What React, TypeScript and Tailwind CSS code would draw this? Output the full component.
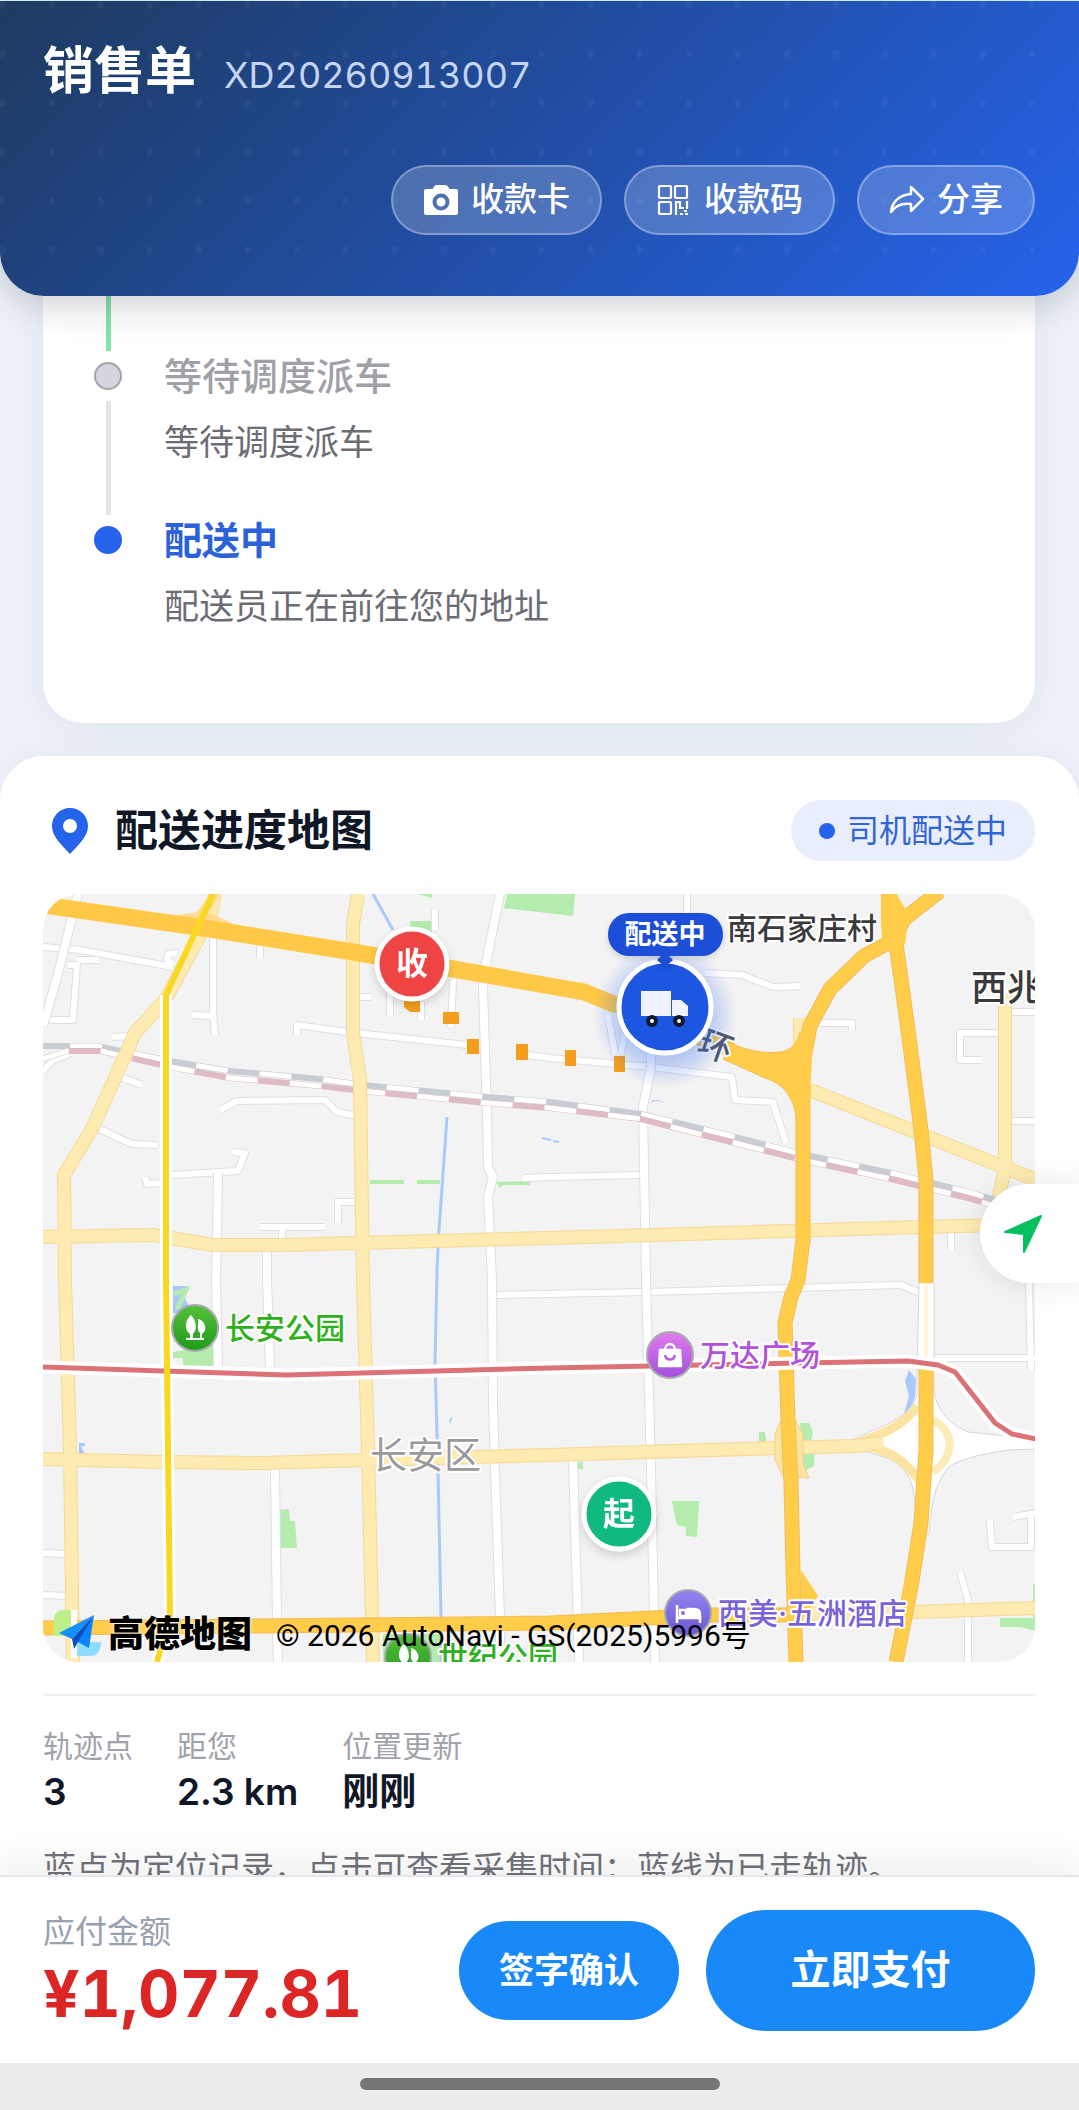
import type { ReactNode } from "react";

interface Step {
  title: string;
  desc: string;
  state: "waiting" | "active";
}

interface Poi {
  name: string;
  x: number;
  y: number;
  textClass: string;
  icon: "park" | "mall" | "hotel";
}

const steps: Step[] = [
  { title: "等待调度派车", desc: "等待调度派车", state: "waiting" },
  { title: "配送中", desc: "配送员正在前往您的地址", state: "active" },
];

const stats = [
  { label: "轨迹点", value: "3" },
  { label: "距您", value: "2.3 km" },
  { label: "位置更新", value: "刚刚" },
];

const pois: Poi[] = [
  { name: "长安公园", x: 152, y: 434, textClass: "fill-[#2db01c]", icon: "park" },
  { name: "万达广场", x: 627, y: 461, textClass: "fill-[#b052dc]", icon: "mall" },
  { name: "西美·五洲酒店", x: 645, y: 719, textClass: "fill-[#7a62d8]", icon: "hotel" },
  { name: "世纪公园", x: 365, y: 763, textClass: "fill-[#2db01c]", icon: "park" },
];

const poiFill = { park: "url(#poi-park)", mall: "url(#poi-mall)", hotel: "url(#poi-hotel)" };

// Side streets
const minorRoads = [
  "M170 44V119L172 141M149 121L170 122",
  "M217 51V64",
  "M254 141V131L304 138L424 151",
  "M177 216L194 207L282 206L294 218L313 222",
  "M52 233L89 250L114 251",
  "M102 283L104 290L119 289M129 281L195 277L202 259L190 258",
  "M217 333H282M239 333V344",
  "M315 308H295V329",
  "M0 53L37 56L130 73M130 70L124 66L125 60L134 59",
  "M25 71H34L30 126H7M34 66H56",
  "M69 143L87 142M77 183L99 191",
  "M0 177L10 166L28 159",
  "M392 16V36M410 86L408 133M347 90V122M378 108V126M315 103H328",
  "M644 0V20",
  "M662 79L699 81L730 93L757 92",
  "M774 129H809V136",
  "M485 161L507 164L608 173L689 183L692 206L730 208L743 249",
  "M565 120L572 160M583 130L578 160",
  "M480 284L507 283L598 281",
  "M957 139H917V166H939",
  "M966 118H993M966 227H993",
  "M454 401L603 398L858 391L881 401",
  "M892 464H993M986 389L988 476",
  "M947 626L949 653H988V620M970 623L993 619",
  "M917 678L925 706V768",
  "M0 659L25 660M0 701L26 702",
  "M908 339V356",
];

const streets = [
  "M35 0L30 19L15 80L0 132",
  "M457 0L443 69L440 93L444 219L445 273L450 283L445 303L449 386L450 509L452 576L457 723V768",
  "M608 150V173L600 213L603 386L608 576L612 768",
  "M175 279L174 344L173 386L175 473",
  "M224 354V386L227 473M232 576L234 729L235 768",
  "M530 566L536 768",
];

const avenues = [
  "M172 0L167 23L122 106L92 139L50 233L21 281L22 386L27 556L30 768",
  "M315 0L310 30L310 139L317 186L320 386L325 556L330 768",
  "M0 343L110 341L170 351H240L507 344L878 333L993 330",
  "M0 565L120 568L220 569L320 566L507 561L733 554L811 552L840 549",
  "M767 196L875 239L993 286",
  "M962 100V273L956 303",
  "M742 720L871 718L993 714",
  "M757 124V150",
];

const highways = [
  "M0 11L154 33L310 58L410 75L507 92L541 98L573 111L640 138L689 156",
  "M851 46L821 62L787 95L767 132L760 169V346L755 386L748 403L742 429L745 526L748 589L750 676L753 768",
  "M846 -5L853 49L865 136L878 236L883 286V389",
  "M883 472V556L878 629L868 693L853 768",
  "M897 -3L861 25L851 46",
  "M0 734L507 729L669 721H748",
];

const railTop = "M0 152L54 152L127 167L187 177L277 185L320 191L444 203L507 208L598 220L676 239L763 261L848 279L925 298L993 318";
const railBottom = "M0 165L24 157H58L127 173L187 184L277 192L320 197L444 209L507 214L598 225L676 245L763 267L848 285L925 304L993 324";
const redLine = "M0 473L120 477L244 481L507 474L865 467L895 471L912 478L952 529L969 540L993 545";

function CameraIcon() {
  return (
    <svg viewBox="0 0 36 32" className="w-9 h-8" aria-hidden="true">
      <path
        fill="white"
        fillRule="evenodd"
        d="M11.500 2Q12.500 1 14 1H22Q23.500 1 24.500 2L26.500 5H33Q35 5 35 7V29Q35 31 33 31H3Q1 31 1 29V7Q1 5 3 5H9.500ZM18 9.500A8.500 8.500 0 1 0 18 26.500A8.500 8.500 0 1 0 18 9.500Z"
      />
      <circle cx="18" cy="18" r="4.500" fill="white" />
    </svg>
  );
}

function QrIcon() {
  return (
    <svg viewBox="0 0 36 32" className="w-9 h-8" fill="none" stroke="white" strokeWidth="2.200" aria-hidden="true">
      <rect x="3" y="2" width="12" height="12" rx="1" />
      <rect x="19" y="2" width="12" height="12" rx="1" />
      <rect x="3" y="18" width="12" height="12" rx="1" />
      <path d="M20 31V18H24V24H28M31 17V25" />
      <path d="M24 30H27M29 30H32M28 27H31" />
    </svg>
  );
}

function ShareIcon() {
  return (
    <svg viewBox="0 0 36 32" className="w-9 h-8" fill="none" stroke="white" strokeWidth="2.500" strokeLinejoin="round" aria-hidden="true">
      <path d="M22 3L34 15L22 27V20C13 19 6 22 2 28C3 18 10 11 22 10Z" />
    </svg>
  );
}

function HeaderButton({ icon, label }: { icon: ReactNode; label: string }) {
  return (
    <button
      type="button"
      className="flex items-center gap-3 h-[70px] px-[30px] rounded-full border-2 border-white/30 bg-white/20 text-[33px] font-medium text-white"
    >
      {icon}
      {label}
    </button>
  );
}

function PoiGlyph({ icon }: { icon: Poi["icon"] }) {
  if (icon === "park") {
    return (
      <g fill="white">
        <path d="M-4 -13C1 -8 3 1 -2 6V10H5V5C1 1 4 -4 3 -9C9 -8 14 1 7 6V10H9V12H-9V10H-5V6C-12 1 -9 -9 -4 -13Z" />
      </g>
    );
  }
  if (icon === "mall") {
    return (
      <g fill="none" stroke="white" strokeWidth="2.500">
        <path d="M-10 -5H10L11 11H-11Z" fill="white" strokeLinejoin="round" />
        <path d="M-5 -5C-5 -13 5 -13 5 -5" />
        <path d="M-5 0C-4 6 4 6 5 0" stroke="#b55fe0" />
      </g>
    );
  }
  return (
    <g fill="none" stroke="white" strokeWidth="2.500">
      <path d="M-11 -8V10M12 10V3" />
      <path d="M-11 5H12V1Q12 -4 6 -4H0V4" fill="white" />
      <path d="M-8 -3H-2V3H-8Z" />
    </g>
  );
}

function RoadLayer({ paths, casing, fill, width }: { paths: string[]; casing: string; fill: string; width: number }) {
  const d = paths.join("");
  return (
    <g fill="none" strokeLinejoin="round">
      <path d={d} stroke={casing} strokeWidth={width + 2} />
      <path d={d} stroke={fill} strokeWidth={width} />
    </g>
  );
}

function DeliveryMap() {
  return (
    <svg
      viewBox="0 0 992 768"
      preserveAspectRatio="xMidYMid slice"
      className="block w-full h-[768px]"
      role="img"
      aria-label="配送进度地图"
    >
      <defs>
        <linearGradient id="poi-park" x1="0" y1="0" x2="0" y2="1">
          <stop offset="0" stopColor="#55c13c" />
          <stop offset="1" stopColor="#1f9a1a" />
        </linearGradient>
        <linearGradient id="poi-mall" x1="0" y1="0" x2="0" y2="1">
          <stop offset="0" stopColor="#e07cec" />
          <stop offset="1" stopColor="#a24fdc" />
        </linearGradient>
        <linearGradient id="poi-hotel" x1="0" y1="0" x2="0" y2="1">
          <stop offset="0" stopColor="#8f86f2" />
          <stop offset="1" stopColor="#6a56cf" />
        </linearGradient>
        <radialGradient id="truck-glow">
          <stop offset="0.600" stopColor="#2563eb" stopOpacity="0.300" />
          <stop offset="1" stopColor="#2563eb" stopOpacity="0" />
        </radialGradient>
      </defs>

      <rect width="993" height="768" fill="#f3f3f3" />

      {/* Parks and water */}
      <g fill="#b4ecae">
        <path d="M464 0H532L530 22L461 14ZM375 0H389V4ZM367 27H389V40H367Z" />
        <path d="M327 286H361V290H327ZM374 286H397V290H374ZM454 288L487 287V291H460L456 294Z" />
        <path d="M130 458L172 450V472H140V464H130Z" />
        <path d="M237 616L246 615L247 627H252L254 654H236Z" />
        <path d="M629 607H656L654 643L643 642V633L634 631Z" />
        <path d="M757 529H766L770 538L767 552H772L771 572L760 578ZM716 538H722L724 552H716ZM534 568H540V575H534Z" />
        <path d="M957 724H993V737L978 733H957ZM990 690H993V724H990ZM340 740H400V768H340Z" />
      </g>
      <g fill="#a9c8fb">
        <path d="M130 392H145L141 402L147 415L130 420Z" />
        <path d="M866 476L873 485L872 503L865 521L861 520L866 502L862 487Z" />
        <path d="M610 206L625 209L614 206L608 209ZM36 549L42 549V552L38 553L42 560H36ZM410 522L407 530L406 526Z" />
      </g>
      <path d="M131 400L143 396L134 415" fill="none" stroke="#b4ecae" strokeWidth="5" />
      <g fill="none" stroke="#aac9fb" strokeWidth="3">
        <path d="M330 0L350 36M396 336L394 376L392 469L395 576L398 723V768" />
        <path d="M404 223L396 336" strokeWidth="3" />
        <path d="M499 244L508 246M510 247L516 248" strokeWidth="2" />
      </g>

      <RoadLayer paths={minorRoads} casing="#dfdfe3" fill="#ffffff" width={6} />
      <RoadLayer paths={streets} casing="#dfdfe3" fill="#ffffff" width={8} />

      {/* Railway */}
      <g fill="none">
        <path d={railTop} stroke="#c8ccd3" strokeWidth="6" />
        <path d={railTop} stroke="white" strokeWidth="5" strokeDasharray="32 32" strokeDashoffset="-27" />
        <path d={railBottom} stroke="#dfbbc3" strokeWidth="6" />
        <path d={railBottom} stroke="white" strokeWidth="5" strokeDasharray="32 32" strokeDashoffset="5" />
      </g>

      {/* Interchange ramps on the east ring */}
      <path
        d="M874 480V500C870 520 850 528 820 541L800 551L832 560C860 568 870 580 872 610L876 640H886C888 610 892 590 905 574C915 565 940 560 965 556L993 555V543L965 542L925 538C905 530 893 515 891 495V389H876Z"
        fill="white"
        stroke="#d6d6dd"
        strokeWidth="1"
      />
      <path d="M874 512C862 530 845 538 815 549C845 556 862 566 876 586" fill="none" stroke="#fbe3a0" strokeWidth="9" />
      <path d="M890 526C912 538 912 562 890 578" fill="none" stroke="#fdebb8" strokeWidth="8" />
      <path d="M883 389V472" stroke="#fff3c9" strokeWidth="3" />

      <RoadLayer paths={avenues} casing="#f6d894" fill="#feebb1" width={12} />
      <path d="M737 528L752 526L760 540V570L766 584L740 582L732 566V540Z" fill="#fde4a0" stroke="#f4cf83" strokeWidth="1" />
      <path d="M128 22L154 18L167 0L178 0L166 18L190 30L154 40Z" fill="#fbdc92" />
      <RoadLayer paths={highways} casing="#f3bb55" fill="#ffcd4a" width={13} />
      <path d="M0 11L154 33L310 58L410 75L507 92L541 98L573 111" fill="none" stroke="#ffc847" strokeWidth="17" />
      {/* Slip roads */}
      <path
        d="M684 147C700 156 720 160 738 158C748 156 754 150 757 138L770 140L766 230H754C752 205 742 190 722 184L680 165Z"
        fill="#ffcd4a"
      />
      <path d="M684 147C700 156 720 160 738 158C748 156 754 150 757 138M754 230C752 205 742 190 722 184L680 165" fill="none" stroke="#f3bb55" strokeWidth="1" />
      <path d="M758 676L775 702L758 728Z" fill="#ffcd4a" />
      <path d="M838 0H853L866 20L862 50L840 58L838 30Z" fill="#ffcd4a" />

      {/* Metro lines */}
      <g fill="none" strokeLinejoin="round">
        <path d="M123 101V386L127 723L114 768" stroke="white" strokeWidth="12" />
        <path d={redLine} stroke="white" strokeWidth="13" />
        <path d={redLine} stroke="#dc7278" strokeWidth="5" />
        <path d="M170 0L123 101V386L127 723L114 768" stroke="#f8d820" strokeWidth="6" />
      </g>

      {/* Place names */}
      <g
        stroke="white"
        strokeWidth="4"
        strokeLinejoin="round"
        className="font-['Inter','Noto_Sans_CJK_SC',sans-serif] font-normal [paint-order:stroke]"
      >
        <text x="684" y="45" className="text-[30px] font-medium fill-[#3a3a3c]">南石家庄村</text>
        <text x="928" y="107" className="text-[36px] font-medium fill-[#3a3a3c]">西兆</text>
        <text x="327" y="575" className="text-[37px] fill-[#9a9a9a]">长安区</text>
        <text x="656" y="164" transform="rotate(20 672 151)" className="text-[34px] font-medium fill-[#55586a]">环</text>
        {pois.map((poi) => (
          <text key={poi.name} x={poi.x + 30} y={poi.y + 11} className={`text-[30px] font-medium ${poi.textClass}`}>
            {poi.name}
          </text>
        ))}
      </g>
      {pois.map((poi) => (
        <g key={poi.name} transform={`translate(${poi.x} ${poi.y})`}>
          <circle r="23" fill={poiFill[poi.icon]} stroke="#a9a9ad" strokeWidth="2" />
          <PoiGlyph icon={poi.icon} />
        </g>
      ))}

      {/* Planned route */}
      <g fill="#f59e1b">
        <path d="M361 104H377V118H367L361 113Z" />
        <rect x="400" y="118" width="16" height="12" />
        <rect x="424" y="145" width="12" height="15" />
        <rect x="473" y="150" width="12" height="16" />
        <rect x="522" y="156" width="11" height="16" />
        <rect x="571" y="162" width="11" height="16" />
      </g>

      {/* Start and destination */}
      <g textAnchor="middle" className="font-['Noto_Sans_CJK_SC',sans-serif] font-bold text-[32px]">
        <g className="drop-shadow-lg">
          <circle cx="369" cy="70" r="35" fill="#ef4444" stroke="white" strokeWidth="5" />
          <text x="369" y="81" fill="white">收</text>
        </g>
        <g className="drop-shadow-lg">
          <circle cx="576" cy="620" r="35" fill="#10b981" stroke="white" strokeWidth="5" />
          <text x="576" y="631" fill="white">起</text>
        </g>
      </g>

      {/* Driver */}
      <circle cx="622" cy="122" r="72" fill="url(#truck-glow)" />
      <circle cx="622" cy="113" r="46" fill="#1d56e0" stroke="white" strokeWidth="5" />
      <g>
        <path d="M598 97H628V122H598Z" fill="#eef3fe" />
        <path d="M629 106H638L645 112V122H629Z" fill="#eef3fe" />
        <circle cx="609" cy="127" r="4" fill="white" stroke="#111827" strokeWidth="4" />
        <circle cx="636" cy="127" r="4" fill="white" stroke="#111827" strokeWidth="4" />
      </g>
      <g className="drop-shadow-md">
        <rect x="565" y="19" width="115" height="43" rx="21" fill="#1d4ed8" />
        <path d="M622 58L630 66L622 73L614 66Z" fill="#1d4ed8" />
      </g>
      <text x="622" y="50" textAnchor="middle" fill="white" className="font-['Noto_Sans_CJK_SC',sans-serif] font-bold text-[27px]">
        配送中
      </text>
    </svg>
  );
}

function AmapLogo() {
  return (
    <svg viewBox="0 0 48 48" className="w-12 h-12" aria-hidden="true">
      <path d="M8 0H17V26H0V8Q1 1 8 0Z" fill="#bdf08a" />
      <path d="M23 32H47Q47 46 36 46H23Z" fill="#8fdcff" />
      <path d="M17 0H23V48H17Z" fill="white" />
      <path d="M40 5L5 23L18 29Z" fill="#1490ff" />
      <path d="M40 5L35 38L22 31Z" fill="#0a84ff" />
      <path d="M40 5L18 29L20 39L24 32Z" fill="#0b4fc4" />
    </svg>
  );
}

function Timeline() {
  return (
    <section className="ml-[43px] mr-11 px-[51px] pb-[92px] rounded-b-[40px] bg-white shadow-[0_4px_32px_rgba(60,80,60,0.08)]">
      <div className="w-7 h-[55px] flex justify-center">
        <div className="w-[5px] bg-[#86e3a5]" />
      </div>
      <ol>
        {steps.map((step, i) => (
          <li key={step.title} className="flex gap-[42px]">
            <div className="w-7 flex flex-col items-center">
              <div className="h-[50px] flex items-center">
                <span
                  className={`block size-7 rounded-full ${
                    step.state === "active" ? "bg-[#2563eb]" : "bg-[#d6d5de] border-2 border-[#a5a4aa]"
                  }`}
                />
              </div>
              {i < steps.length - 1 && <div className="flex-1 w-[5px] bg-[#e5e5e7]" />}
            </div>
            <div className={i < steps.length - 1 ? "pb-12" : ""}>
              <h3
                className={`text-[38px] leading-[50px] ${
                  step.state === "active" ? "font-bold text-[#2b62d9]" : "font-medium text-[#a0a1a7]"
                }`}
              >
                {step.title}
              </h3>
              <p className="mt-4 text-[35px] leading-[50px] text-[#6c6d74]">{step.desc}</p>
            </div>
          </li>
        ))}
      </ol>
    </section>
  );
}

export default function App() {
  return (
    <div className="relative flex flex-col h-screen overflow-hidden bg-[#edf2fa] font-['Inter','Noto_Sans_CJK_SC',sans-serif]">
      <header className="relative z-10 shrink-0 pl-[43px] pr-11 pt-[34px] pb-[61px] rounded-b-[44px] border-t border-[#cdeaf5] bg-[linear-gradient(135deg,#1e3a5f,#2563eb)] shadow-[0_8px_36px_rgba(15,23,42,0.22)]">
        <div className="absolute inset-0 rounded-b-[44px] bg-[radial-gradient(circle_at_2px_4px,rgba(255,255,255,0.04)_3px,transparent_5px)] bg-size-[49px_49px]" />
        <div className="relative flex items-center gap-7 h-[71px]">
          <h1 className="text-[51px] leading-[71px] font-bold text-white">销售单</h1>
          <span className="pt-2 text-[36px] text-[#c6d5f4] tabular-nums">XD20260913007</span>
        </div>
        <div className="relative flex justify-end gap-[22px] mt-[59px]">
          <HeaderButton icon={<CameraIcon />} label="收款卡" />
          <HeaderButton icon={<QrIcon />} label="收款码" />
          <HeaderButton icon={<ShareIcon />} label="分享" />
        </div>
      </header>

      <main className="flex-1 min-h-0 overflow-y-auto [scrollbar-width:none]">
        <Timeline />

        <section className="mt-[33px] pl-[43px] pr-11 pt-11 pb-12 rounded-t-[44px] bg-white shadow-[0_0_32px_rgba(60,80,60,0.06)]">
          <div className="flex items-center justify-between">
            <div className="flex items-center gap-[27px]">
              <svg viewBox="0 0 36 46" className="ml-[9px] w-9 h-[46px]" aria-hidden="true">
                <path
                  fill="#2563eb"
                  fillRule="evenodd"
                  d="M18 0C28 0 36 8 36 18C36 29 26 37 18 46C10 37 0 29 0 18C0 8 8 0 18 0ZM18 11A7 7 0 1 0 18 25A7 7 0 1 0 18 11Z"
                />
              </svg>
              <h2 className="text-[43px] leading-[61px] font-bold text-[#101828]">配送进度地图</h2>
            </div>
            <span className="flex items-center gap-3 h-[61px] px-7 rounded-full bg-[#e8eefc] text-[32px] text-[#3465d4]">
              <span className="size-4 rounded-full bg-[#2563eb]" />
              司机配送中
            </span>
          </div>

          <div className="relative mt-[33px] rounded-[36px] overflow-hidden">
            <DeliveryMap />
            <div className="absolute left-[11px] bottom-1 flex items-center text-black">
              <AmapLogo />
              <span className="ml-1.5 text-[36px] leading-12 font-black [text-shadow:0_0_4px_white]">高德地图</span>
              <span className="ml-6 pt-1 text-[30px] font-['Roboto','Noto_Sans_CJK_SC',sans-serif]">
                © 2026 AutoNavi - GS(2025)5996号
              </span>
            </div>
          </div>

          <dl className="flex gap-11 mt-8 pt-7 border-t-2 border-[#f1f2f4]">
            {stats.map((s) => (
              <div key={s.label}>
                <dt className="text-[30px] leading-11 text-[#a1a3aa]">{s.label}</dt>
                <dd className="text-[37px] leading-12 font-semibold text-[#101828]">{s.value}</dd>
              </div>
            ))}
          </dl>
          <p className="mt-7 text-[33px] leading-12 text-[#71737a]">
            蓝点为定位记录，点击可查看采集时间；蓝线为已走轨迹。
          </p>
        </section>
      </main>

      {/* Floating locate button */}
      <button
        type="button"
        aria-label="定位"
        className="absolute z-10 right-0 top-[1184px] flex items-center w-[99px] h-[99px] pl-6 rounded-l-full bg-white shadow-[0_0_30px_rgba(15,23,42,0.10)]"
      >
        <svg viewBox="0 0 38 38" className="size-[38px]" aria-hidden="true">
          <path d="M37 1L20 37V19L1 17Z" fill="#07c160" stroke="#07c160" strokeWidth="2" strokeLinejoin="round" />
        </svg>
      </button>

      <footer className="relative z-10 shrink-0 bg-white border-t-2 border-[#e5e7eb] shadow-[0_-8px_40px_rgba(15,23,42,0.08)]">
        <div className="flex items-center pl-[43px] pr-11 h-[186px]">
          <div className="flex-1">
            <p className="text-[32px] leading-12 text-[#98a1b0]">应付金额</p>
            <p className="text-[64px] leading-[76px] font-bold text-[#dc2626] tabular-nums">¥1,077.81</p>
          </div>
          <button type="button" className="w-[220px] h-[99px] rounded-full bg-[#1989fa] text-[35px] font-bold text-white">
            签字确认
          </button>
          <button type="button" className="ml-[27px] w-[329px] h-[121px] rounded-full bg-[#1989fa] text-[40px] font-bold text-white">
            立即支付
          </button>
        </div>
        <div className="flex justify-center items-start h-[47px] pt-[15px] bg-[#ebecec]">
          <div className="w-[360px] h-3 rounded-full bg-[#747775]" />
        </div>
      </footer>
    </div>
  );
}
